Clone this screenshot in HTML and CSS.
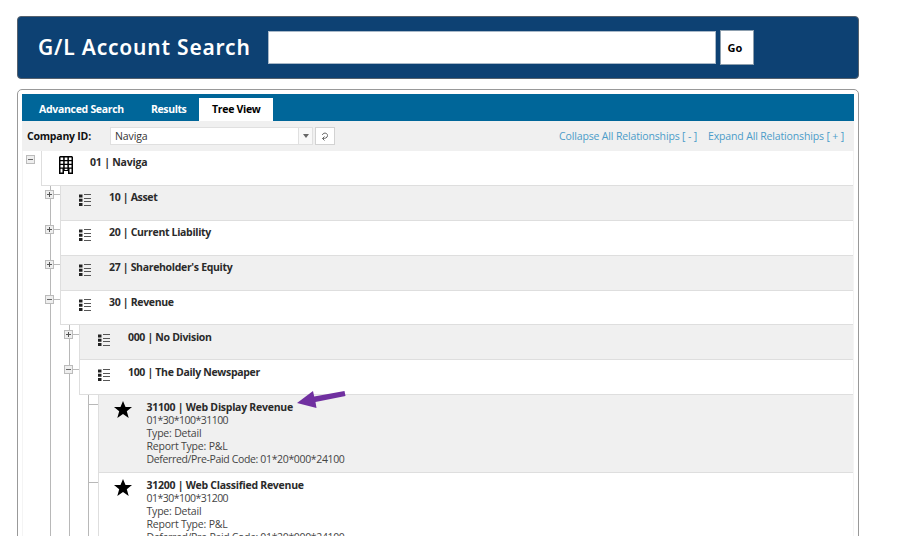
FILE: index.html
```html
<!DOCTYPE html>
<html lang="en">
<head>
<meta charset="utf-8">
<title>G/L Account Search</title>
<link rel="stylesheet" href="styles.css">
</head>
<body>
<svg class="defs" width="0" height="0">
  <symbol id="list" viewBox="0 0 12 13">
    <path fill="#222" d="M0 .5h3.500v3H0zM0 4.700h3.500v3H0zM0 9h3.500v3H0z"/>
    <path stroke="#555" d="M5 .5h7M5 4.500h7M5 7.500h7M5 11.500h7"/>
  </symbol>
  <symbol id="star" viewBox="0 0 18 17">
    <path d="M9 0l2.500 6h6.500l-5.200 4.200 1.900 6.800L9 13l-5.700 4 1.900-6.800L0 6h6.500z"/>
  </symbol>
</svg>
<header class="banner">
  <h1>G/L Account Search</h1>
  <input class="query" type="text" aria-label="Search">
  <button class="go">Go</button>
</header>
<main class="panel">
  <nav class="tabs">
    <a class="tab advanced">Advanced Search</a>
    <a class="tab results">Results</a>
    <a class="tab active">Tree View</a>
  </nav>
  <div class="toolbar">
    <span class="label">Company ID:</span>
    <div class="combo"><span class="value">Naviga</span><span class="drop"><svg width="6" height="4"><path d="M0 0h6L3 4z" fill="#666"/></svg></span></div>
    <button class="refresh"><svg width="8" height="9" viewBox="0 0 8 9"><path d="M1.500 3C1.500.500 6.500.200 6.500 3.500 6.500 6 4 6.500 1.500 6.500M3.500 4.500L1.500 6.500 3.500 8.500" fill="none" stroke="#666"/></svg></button>
    <div class="links"><a class="collapse">Collapse All Relationships [ - ]</a><a class="expand">Expand All Relationships [ + ]</a></div>
  </div>
  <div class="tree">
    <div class="node"><div class="row">
      <i class="toggle"></i>
      <svg class="icon building" viewBox="0 0 14 18"><path fill="#000" fill-rule="evenodd" d="M1 0h12l1 1v17H9v-3H5v3H0V1zM1.500 1.500v2.500h2.700V1.500zm4.200 0v2.500h2.700V1.500zm4.200 0v2.500h2.600V1.500zM1.500 5.200v2.500h2.700V5.200zm4.200 0v2.500h2.700V5.200zm4.200 0v2.500h2.600V5.200zM1.500 9v2.500h2.700V9zm4.200 0v2.500h2.700V9zm4.200 0v2.500h2.600V9zM1.500 12.700v3.800h2v-3.800zm4.200 0v1.300h2.700v-1.300zm4.800 0v3.800h2v-3.800z"/></svg>
      <b class="root">01 | Naviga</b></div>
      <div class="children">
        <div class="node"><div class="row alt"><i class="toggle plus"></i><svg class="icon"><use href="#list"/></svg><b>10 | Asset</b></div></div>
        <div class="node"><div class="row"><i class="toggle plus"></i><svg class="icon"><use href="#list"/></svg><b>20 | Current Liability</b></div></div>
        <div class="node"><div class="row alt"><i class="toggle plus"></i><svg class="icon"><use href="#list"/></svg><b>27 | Shareholder's Equity</b></div></div>
        <div class="node"><div class="row"><i class="toggle"></i><svg class="icon"><use href="#list"/></svg><b>30 | Revenue</b></div>
          <div class="children">
            <div class="node"><div class="row alt"><i class="toggle plus"></i><svg class="icon"><use href="#list"/></svg><b>000 | No Division</b></div></div>
            <div class="node"><div class="row"><i class="toggle"></i><svg class="icon"><use href="#list"/></svg><b>100 | The Daily Newspaper</b></div>
              <div class="children">
                <div class="node leaf"><div class="row alt detail">
                  <svg class="icon star"><use href="#star"/></svg>
                  <div class="text"><b>31100 | Web Display Revenue</b><span class="code">01*30*100*31100</span><span>Type: Detail</span><span>Report Type: P&amp;L</span><span class="deferred">Deferred/Pre-Paid Code: 01*20*000*24100</span></div>
                  <svg class="pointer" width="50" height="20" viewBox="0 0 50 20"><path fill="#7030a0" d="M0 14L16 2l1.200 5.500L47.500 2l1 5-30 6 1 6z"/></svg>
                </div></div>
                <div class="node leaf"><div class="row detail">
                  <svg class="icon star"><use href="#star"/></svg>
                  <div class="text"><b>31200 | Web Classified Revenue</b><span class="code">01*30*100*31200</span><span>Type: Detail</span><span>Report Type: P&amp;L</span><span class="deferred">Deferred/Pre-Paid Code: 01*20*000*24100</span></div>
                </div></div>
              </div>
            </div>
          </div>
        </div>
      </div>
    </div>
  </div>
</main>
</body>
</html>
```
FILE: styles.css
```css
* { box-sizing: border-box; }
html { height: 100%; overflow: hidden; }
body {
  margin: 0; padding: 16px 40px 0 17px; height: 536px; overflow: hidden;
  background: #fff; color: #2a2a2a;
  font: 10.5px/13px "Open Sans", "Noto Sans", sans-serif;
}
.defs { position: absolute; }
.banner {
  display: flex; align-items: center; width: 842px; height: 63px;
  padding-left: 20px; background: #0d4173; border: 1px solid #56616d; border-radius: 4px;
}
h1 {
  width: 230px; margin: 0 0 2px; color: #fff; white-space: nowrap;
  font: 600 21px/30px "Noto Sans", "Open Sans", sans-serif; letter-spacing: .8px;
}
.query { width: 448px; height: 33px; padding: 0; border: 1px solid #a8b8c8; background: #fff; }
.go {
  width: 34px; height: 35px; margin-left: 4px; padding: 0 4px 0 0; background: #fff;
  border: 1px solid #8d9fae; font: 700 11px "Open Sans", sans-serif; color: #000;
}
.panel {
  width: 842px; height: 460px; margin-top: 10px; padding: 4px;
  border: 1px solid #999; border-radius: 5px;
}
.tabs { display: flex; align-items: flex-end; height: 27px; background: #006699; padding-left: 4px; }
.tab { height: 23px; padding: 0 13px; color: #fff; font-weight: 700; line-height: 23px; letter-spacing: -.3px; white-space: nowrap; }
.advanced { width: 112px; }
.results { width: 61px; letter-spacing: -.4px; }
.active { width: 74px; background: #fff; color: #000; }
.toolbar { display: flex; align-items: center; height: 30px; padding: 0 10px 0 5px; background: #f0f0f0; }
.label { width: 83px; font-weight: 700; color: #111; letter-spacing: -.22px; }
.combo { display: flex; width: 203px; height: 18px; background: #fff; border: 1px solid #e0e0e0; }
.value { flex: 1; padding-left: 4px; line-height: 17px; color: #333; letter-spacing: -.1px; }
.drop { display: grid; place-items: center; width: 14px; background: #f8f8f8; border-left: 1px solid #e0e0e0; }
.refresh { display: grid; place-items: center; width: 20px; height: 18px; margin-left: 2px; padding: 0; background: #fff; border: 1px solid #d2d2d2; }
.links { display: flex; gap: 11px; margin-left: auto; color: #4b9cc9; white-space: nowrap; letter-spacing: -.15px; }
.tree { padding-left: 18px; border: solid #f4f4f4; border-width: 0 1px; }
.row { position: relative; display: flex; height: 34.9px; background: #fff; border: solid #dedede; border-width: 0 0 1px 1px; }
.row b { white-space: nowrap; line-height: 13px; margin-top: 5px; letter-spacing: -.32px; }
.row .root { letter-spacing: -.2px; }
.alt { background: #f0f0f0; }
.icon { flex: none; width: 12px; height: 13px; margin: 8px 18px 0 18px; }
.building { width: 14px; height: 18px; margin: 5px 17px 0 17px; }
.children { margin-left: 9px; padding-left: 9px; border-left: 1px solid #b8b8b8; }
.toggle {
  position: absolute; left: -16px; top: 4px; width: 9px; height: 9px;
  border: 1px solid #bbb;
  background: linear-gradient(#666, #666) center / 5px 1px no-repeat, #eee;
}
.toggle.plus { background: linear-gradient(#555, #555) center / 5px 1px no-repeat, linear-gradient(#555, #555) center / 1px 5px no-repeat, #eee; }
.children .toggle::after { content: ""; position: absolute; left: 8px; top: 3px; width: 6px; height: 1px; background: #bbb; }
.children .children .row { padding-top: 1px; }
.children .children .toggle { top: 5px; }
.detail { height: 78px; }
.leaf .row::before { content: ""; position: absolute; left: -10px; top: 9px; width: 9px; height: 1px; background: #b8b8b8; }
.icon.star { width: 18px; height: 17px; margin: 5px 15px 0 14.500px; }
.text { display: flex; flex-direction: column; padding-top: 5px; white-space: nowrap; }
.text b { margin: 0; letter-spacing: -.26px; }
.text span { color: #444; letter-spacing: -.2px; }
.text .code { letter-spacing: -.52px; }
.text .deferred { letter-spacing: -.35px; }
.pointer { position: absolute; left: 198px; top: -6px; }
```
